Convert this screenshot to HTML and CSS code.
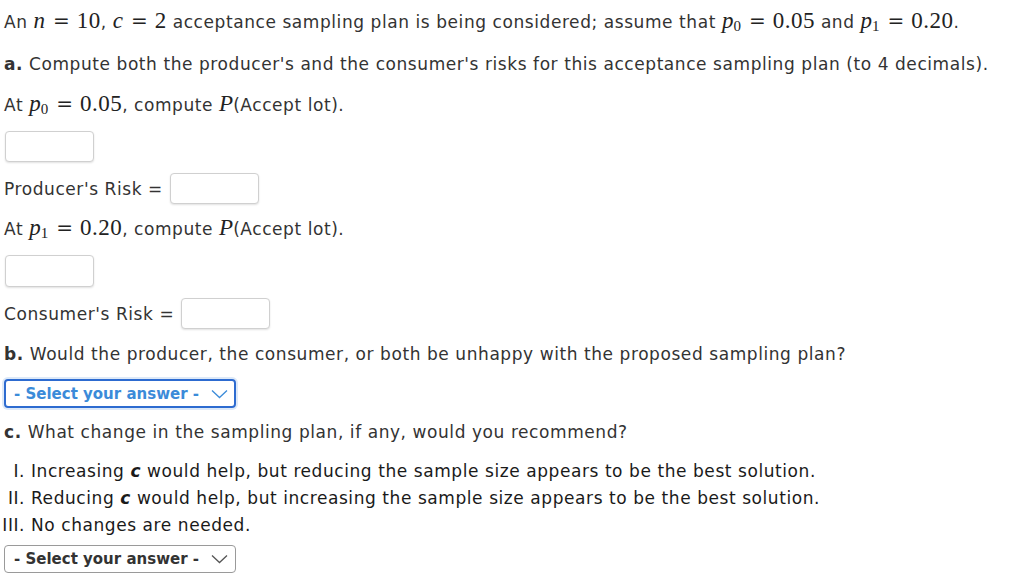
FILE: index.html
```html
<!DOCTYPE html>
<html>
<head>
<meta charset="utf-8">
<link rel="stylesheet" href="styles.css">
</head>
<body>
<div class="page">
  <p class="line first">An <span class="m"><i>n</i><span class="rel">=</span>10</span>, <span class="m"><i>c</i><span class="rel">=</span>2</span> acceptance sampling plan is being considered; assume that <span class="m"><i>p</i><sub>0</sub><span class="rel">=</span>0.05</span> and <span class="m"><i>p</i><sub>1</sub><span class="rel">=</span>0.20</span>.</p>
  <p class="line gap18"><b>a.</b> Compute both the producer's and the consumer's risks for this acceptance sampling plan (to 4 decimals).</p>
  <p class="line gap17">At <span class="m"><i>p</i><sub>0</sub><span class="rel">=</span>0.05</span>, compute <span class="m"><i>P</i></span>(Accept lot).</p>
  <div class="box solo gap14"></div>
  <div class="row gap11"><span>Producer's Risk =</span><div class="box"></div></div>
  <p class="line gap13">At <span class="m"><i>p</i><sub>1</sub><span class="rel">=</span>0.20</span>, compute <span class="m"><i>P</i></span>(Accept lot).</p>
  <div class="box solo tall gap14"></div>
  <div class="row gap11"><span>Consumer's Risk =</span><div class="box"></div></div>
  <p class="line gap13"><b>b.</b> Would the producer, the consumer, or both be unhappy with the proposed sampling plan?</p>
  <div class="select active gap13"><span class="label">- Select your answer -</span><svg width="17" height="10" viewBox="0 0 17 10"><path d="M1 1.5 L8.5 8.5 L16 1.5" fill="none" stroke="currentColor" stroke-width="1.3"/></svg></div>
  <p class="line gap12"><b>c.</b> What change in the sampling plan, if any, would you recommend?</p>
  <ol class="opts">
    <li>Increasing <b><i>c</i></b> would help, but reducing the sample size appears to be the best solution.</li>
    <li>Reducing <b><i>c</i></b> would help, but increasing the sample size appears to be the best solution.</li>
    <li>No changes are needed.</li>
  </ol>
  <div class="select plain"><span class="label">- Select your answer -</span><svg width="17" height="10" viewBox="0 0 17 10"><path d="M1 1.5 L8.5 8.5 L16 1.5" fill="none" stroke="currentColor" stroke-width="1.3"/></svg></div>
</div>
</body>
</html>
```

FILE: styles.css
```css
html, body {
  margin: 0;
  background: #fff;
}
body {
  font-family: Verdana, "DejaVu Sans", sans-serif;
  font-size: 17px;
  letter-spacing: 0.57px;
  color: #333;
}
.page {
  padding: 10px 4px;
}
.line {
  margin: 0;
  line-height: 24px;
  white-space: nowrap;
}
.first { margin-top: 0; }
.gap18 { margin-top: 18px; }
.gap17 { margin-top: 17px; }
.gap14 { margin-top: 14px; }
.gap13 { margin-top: 13px; }
.gap12 { margin-top: 12px; }
.gap11 { margin-top: 11px; }
.m {
  font-family: "Liberation Serif", "DejaVu Serif", serif;
  font-size: 23px;
  letter-spacing: 0.5px;
  line-height: 0;
  color: #222;
}
.m i { font-style: italic; letter-spacing: 0; }
.m sub {
  font-size: 15px;
  vertical-align: -3px;
  line-height: 0;
  letter-spacing: 0;
}
.rel {
  font-family: "DejaVu Serif", serif;
  font-size: 20px;
  margin: 0 7px 0 8px;
  letter-spacing: 0;
}
.box {
  width: 87px;
  height: 29px;
  border: 1px solid #d0d0d0;
  border-radius: 4px;
  box-shadow: 0 1px 2px rgba(0,0,0,0.12);
  background: #fff;
  flex: none;
}
.solo { margin-left: 1px; }
.tall { height: 30px; }
.row {
  display: flex;
  align-items: center;
  gap: 7px;
  line-height: 24px;
}
.select {
  display: flex;
  align-items: center;
  justify-content: space-between;
  box-sizing: border-box;
  width: 232px;
  border-radius: 4px;
  font-weight: bold;
  font-size: 15px;
  letter-spacing: 0;
  white-space: nowrap;
}
.label { flex: none; }
.select svg { flex: none; color: #555; }
.select.active {
  height: 29px;
  padding: 0 6px 0 8px;
  border: 2px solid #2d6bd0;
  color: #3b8bd9;
  box-shadow: 0 0 0 2px #dde9f8;
}
.select.active svg { color: #3b8bd9; }
.select.plain {
  height: 28px;
  padding: 0 7px 0 9px;
  border: 1px solid #9a9a9a;
  color: #333;
}
.opts {
  margin: 14px 0 0 0;
  padding-left: 27px;
  list-style: upper-roman;
  line-height: 27px;
  color: #1a1a1a;
}
.opts + .select { margin-top: 6px; }
```
